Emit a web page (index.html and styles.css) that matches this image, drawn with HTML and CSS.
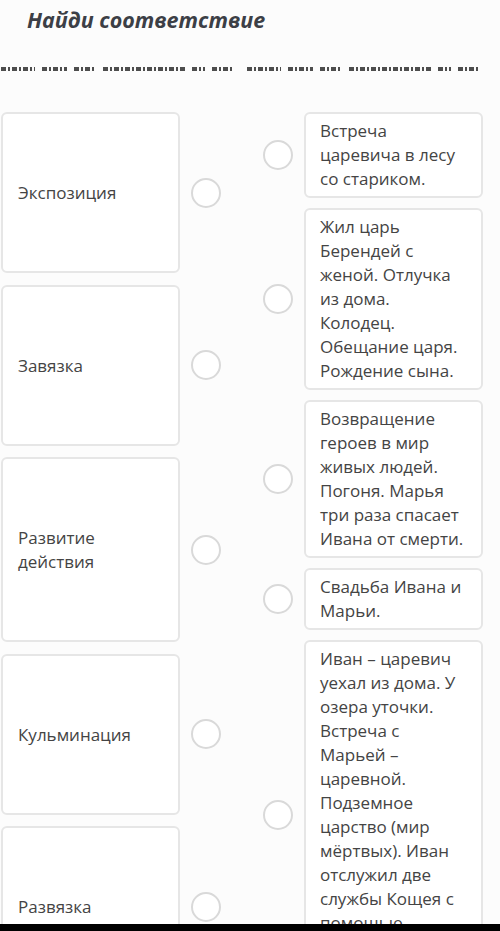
FILE: index.html
```html
<!DOCTYPE html>
<html lang="ru">

<head>
    <meta charset="UTF-8">
    <meta name="viewport" content="width=device-width, initial-scale=1.0">
    <title>Найди соответствие</title>
    <link rel="stylesheet" href="styles.css">
</head>

<body>
    <header class="quiz-header">
        <h1>Найди соответствие</h1>
        <div class="hint">
            <div class="hint-half">
                <span class="w w1"></span>
                <span class="w w2"></span>
                <span class="w w3"></span>
                <span class="w w4"></span>
                <span class="w w5"></span>
                <span class="w w6"></span>
            </div>
            <div class="hint-half">
                <span class="w w1"></span>
                <span class="w w2"></span>
                <span class="w w3"></span>
                <span class="w w4"></span>
                <span class="w w5"></span>
                <span class="w w6"></span>
            </div>
        </div>
    </header>

    <main class="match">
        <div class="column left">
            <div class="item">
                <div class="card term">Экспозиция</div>
                <span class="dot"></span>
            </div>
            <div class="item">
                <div class="card term">Завязка</div>
                <span class="dot"></span>
            </div>
            <div class="item">
                <div class="card term">Развитие действия</div>
                <span class="dot"></span>
            </div>
            <div class="item">
                <div class="card term">Кульминация</div>
                <span class="dot"></span>
            </div>
            <div class="item">
                <div class="card term">Развязка</div>
                <span class="dot"></span>
            </div>
        </div>

        <div class="column right">
            <div class="item">
                <span class="dot"></span>
                <div class="card answer">Встреча царевича в лесу со стариком.</div>
            </div>
            <div class="item">
                <span class="dot"></span>
                <div class="card answer">Жил царь Берендей с женой. Отлучка из дома. Колодец. Обещание царя. Рождение сына.</div>
            </div>
            <div class="item">
                <span class="dot"></span>
                <div class="card answer">Возвращение героев в мир живых людей. Погоня. Марья три раза спасает Ивана от смерти.</div>
            </div>
            <div class="item">
                <span class="dot"></span>
                <div class="card answer">Свадьба Ивана и Марьи.</div>
            </div>
            <div class="item">
                <span class="dot"></span>
                <div class="card answer">Иван – царевич уехал из дома. У озера уточки. Встреча с Марьей – царевной. Подземное царство (мир мёртвых). Иван отслужил две службы Кощея с помощью Марьи‑царевны. Побег.</div>
            </div>
        </div>
    </main>

    <div class="bottom-bar"></div>
</body>

</html>
```

FILE: styles.css
```css
* {
    margin: 0;
    padding: 0;
    box-sizing: border-box;
}

html,
body {
    height: 100%;
    overflow: hidden;
}

body {
    font-family: "Open Sans", "Liberation Sans", sans-serif;
    background-color: #fcfcfc;
    color: #444;
}

.quiz-header {
    height: 112px;
    padding-top: 6px;
}

.quiz-header h1 {
    padding-left: 27px;
    font-size: 21.5px;
    font-style: italic;
    font-weight: bold;
    line-height: 28px;
    color: #3c3f46;
}

.hint {
    display: flex;
    gap: 13px;
    margin-top: 33px;
    padding-left: 1px;
}

.hint-half {
    display: flex;
    align-items: center;
    gap: 7px;
}

.w {
    display: block;
    height: 4px;
    background: repeating-linear-gradient(90deg,
            #4d4d4d 0 5px,
            transparent 5px 7px,
            #4d4d4d 7px 9px,
            transparent 9px 11px);
}

.w1 { width: 34px; }
.w2 { width: 25px; }
.w3 { width: 22px; }
.w4 { width: 82px; }
.w5 { width: 13px; }
.w6 { width: 22px; }

.match {
    display: flex;
    justify-content: space-between;
    padding: 0 17px 0 1px;
}

.column {
    display: flex;
    flex-direction: column;
    width: 220px;
}

.left {
    gap: 11.5px;
}

.right {
    gap: 10px;
}

.item {
    display: flex;
    align-items: center;
    gap: 11px;
}

.card {
    flex: 1;
    background-color: #fff;
    border: 2px solid #e6e6e6;
    border-radius: 6px;
    font-size: 17px;
    line-height: 24px;
}

.term {
    padding: 67px 15px 66px;
}

.answer {
    padding: 5px 12px 5px 14px;
}

.dot {
    flex: none;
    width: 30px;
    height: 30px;
    border: 2px solid #d9d9d9;
    border-radius: 50%;
    background-color: #fff;
}

.bottom-bar {
    position: fixed;
    left: 0;
    right: 0;
    bottom: 0;
    height: 7px;
    background-color: #000;
}
```
